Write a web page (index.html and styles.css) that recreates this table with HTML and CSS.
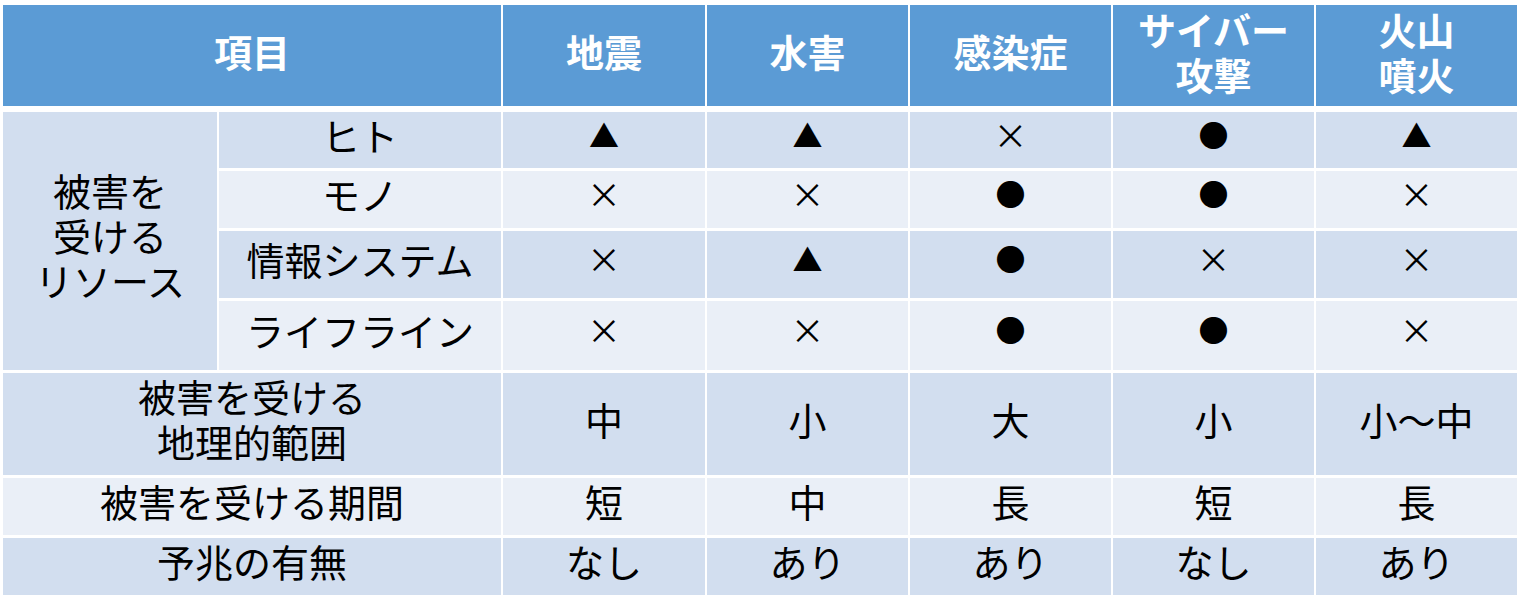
FILE: index.html
```html
<!DOCTYPE html>
<html lang="ja">
<head>
<meta charset="utf-8">
<link rel="stylesheet" href="styles.css">
</head>
<body>
<div class="grid">
  <div class="h span2">項目</div>
  <div class="h">地震</div>
  <div class="h">水害</div>
  <div class="h">感染症</div>
  <div class="h">サイバー<br>攻撃</div>
  <div class="h">火山<br>噴火</div>

  <div class="c dark group">被害を<br>受ける<br>リソース</div>
  <div class="c dark">ヒト</div>
  <div class="c dark sym">▲</div>
  <div class="c dark sym">▲</div>
  <div class="c dark sym x">×</div>
  <div class="c dark sym">●</div>
  <div class="c dark sym">▲</div>

  <div class="c light">モノ</div>
  <div class="c light sym x">×</div>
  <div class="c light sym x">×</div>
  <div class="c light sym">●</div>
  <div class="c light sym">●</div>
  <div class="c light sym x">×</div>

  <div class="c dark">情報システム</div>
  <div class="c dark sym x">×</div>
  <div class="c dark sym">▲</div>
  <div class="c dark sym">●</div>
  <div class="c dark sym x">×</div>
  <div class="c dark sym x">×</div>

  <div class="c light">ライフライン</div>
  <div class="c light sym x">×</div>
  <div class="c light sym x">×</div>
  <div class="c light sym">●</div>
  <div class="c light sym">●</div>
  <div class="c light sym x">×</div>

  <div class="c dark span2">被害を受ける<br>地理的範囲</div>
  <div class="c dark">中</div>
  <div class="c dark">小</div>
  <div class="c dark">大</div>
  <div class="c dark">小</div>
  <div class="c dark">小～中</div>

  <div class="c light span2">被害を受ける期間</div>
  <div class="c light">短</div>
  <div class="c light">中</div>
  <div class="c light">長</div>
  <div class="c light">短</div>
  <div class="c light">長</div>

  <div class="c dark span2">予兆の有無</div>
  <div class="c dark">なし</div>
  <div class="c dark">あり</div>
  <div class="c dark">あり</div>
  <div class="c dark">なし</div>
  <div class="c dark">あり</div>
</div>
</body>
</html>
```

FILE: styles.css
```css
html, body {
  margin: 0;
  padding: 0;
  background: #ffffff;
}

body {
  font-family: "Noto Sans CJK JP", "Noto Sans", sans-serif;
  color: #000000;
}

.grid {
  display: grid;
  grid-template-columns: 214px 282px 202px 201px 201px 201px 201px;
  grid-template-rows: 104px 56px 57px 67px 69px 102px 57px 57px;
  column-gap: 2px;
  row-gap: 3px;
  margin: 5px 0 0 3px;
  width: 1514px;
}

.h {
  background: #5b9bd5;
  color: #ffffff;
  font-weight: bold;
  font-size: 38px;
  line-height: 45px;
  margin-bottom: 3px;
  display: flex;
  align-items: center;
  justify-content: center;
  text-align: center;
  padding-bottom: 10px;
  box-sizing: border-box;
}

.span2 {
  grid-column: span 2;
}

.c {
  font-size: 38px;
  line-height: 45px;
  display: flex;
  align-items: center;
  justify-content: center;
  text-align: center;
  padding-bottom: 12px;
  box-sizing: border-box;
}

.group {
  grid-row: span 4;
  padding-bottom: 14px;
}

.dark {
  background: #d2deef;
}

.light {
  background: #eaeff7;
}

.sym {
  font-size: 30px;
}

.x {
  font-size: 34px;
}
```
